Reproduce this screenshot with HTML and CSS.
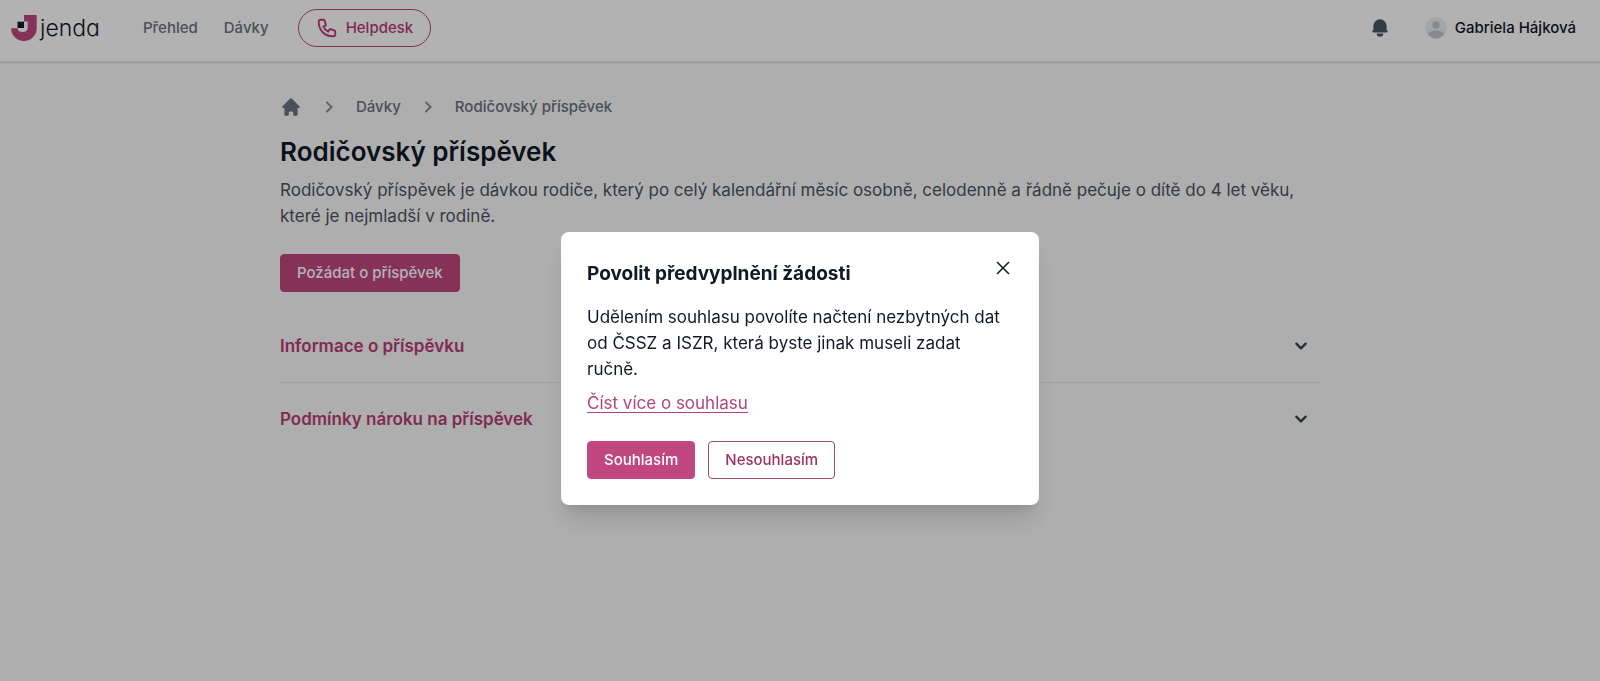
FILE: index.html
```html
<!DOCTYPE html>
<html lang="cs">
<head>
<meta charset="utf-8">
<meta name="viewport" content="width=device-width, initial-scale=1">
<title>Rodičovský příspěvek – Jenda</title>
<link rel="stylesheet" href="styles.css">
</head>
<body>
<header class="topbar">
  <a class="logo" href="#">
    <svg class="logo-mark" viewBox="0 0 26 26" aria-hidden="true">
      <path fill="#c0477f" d="M13 0h12.700v13.200a12.800 12.800 0 0 1-25.600 0h6.400a5.200 4.800 0 0 0 10.200 0V6.500H13z"/>
      <path fill="#111827" d="M6.500 6.700H13V13H6.500z"/>
    </svg>
    <span class="logo-text">jenda</span>
  </a>
  <nav class="nav">
    <a class="nav-link" href="#">Přehled</a>
    <a class="nav-link" href="#">Dávky</a>
    <a class="helpdesk" href="#">
      <svg class="icon-phone" viewBox="0 0 24 24" aria-hidden="true"><path d="M3 5a2 2 0 0 1 2-2h3.280a1 1 0 0 1 .95.680l1.500 4.500a1 1 0 0 1-.5 1.200l-2.260 1.130a11 11 0 0 0 5.520 5.520l1.130-2.260a1 1 0 0 1 1.200-.5l4.500 1.500a1 1 0 0 1 .68.950V19a2 2 0 0 1-2 2h-1C9.700 21 3 14.300 3 6V5z"/></svg>
      Helpdesk
    </a>
  </nav>
  <div class="account">
    <button class="bell" type="button" aria-label="Oznámení">
      <svg class="icon" viewBox="0 0 20 20" aria-hidden="true"><path d="M10 2a6 6 0 0 0-6 6v3.590l-.7.700A1 1 0 0 0 4 14h12a1 1 0 0 0 .7-1.710l-.7-.700V8a6 6 0 0 0-6-6zM10 18a3 3 0 0 1-3-3h6a3 3 0 0 1-3 3z"/></svg>
    </button>
    <a class="user" href="#">
      <svg class="avatar" viewBox="0 0 22 22" aria-hidden="true">
        <circle cx="11" cy="11" r="11" fill="#ebecef"/>
        <circle cx="11" cy="8" r="3.700" fill="#c3c6cd"/>
        <path fill="#c3c6cd" d="M2.800 16.500c1.700-2 5-3 8.200-3s6.500 1 8.200 3A10.500 10.500 0 0 1 11 21.500a10.500 10.500 0 0 1-8.200-5z"/>
      </svg>
      Gabriela Hájková
    </a>
  </div>
</header>

<main class="page">
  <nav class="crumbs" aria-label="Drobečková navigace">
    <a class="crumb-home" href="#" aria-label="Domů"><svg class="icon" viewBox="0 0 20 20" aria-hidden="true"><path d="M10.700 2.300a1 1 0 0 0-1.400 0l-7 7a1 1 0 0 0 .7 1.700H4v6a1 1 0 0 0 1 1h2a1 1 0 0 0 1-1v-2a1 1 0 0 1 1-1h2a1 1 0 0 1 1 1v2a1 1 0 0 0 1 1h2a1 1 0 0 0 1-1v-6h1a1 1 0 0 0 .7-1.700z"/></svg></a>
    <svg class="crumb-sep" viewBox="0 0 20 20" aria-hidden="true"><path d="M7.500 5l5 5-5 5"/></svg>
    <a href="#">Dávky</a>
    <svg class="crumb-sep" viewBox="0 0 20 20" aria-hidden="true"><path d="M7.500 5l5 5-5 5"/></svg>
    <a href="#">Rodičovský příspěvek</a>
  </nav>
  <h1 class="title">Rodičovský příspěvek</h1>
  <p class="lead">Rodičovský příspěvek je dávkou rodiče, který po celý kalendářní měsíc osobně, celodenně a řádně pečuje o dítě do 4 let věku, které je nejmladší v rodině.</p>
  <button class="btn btn-primary" type="button">Požádat o příspěvek</button>
  <div class="accordion">
    <button class="accordion-row" type="button" aria-expanded="false">Informace o příspěvku
      <svg class="chevron" viewBox="0 0 12 12" aria-hidden="true"><path d="M2 4l4 4 4-4"/></svg>
    </button>
    <button class="accordion-row" type="button" aria-expanded="false">Podmínky nároku na příspěvek
      <svg class="chevron" viewBox="0 0 12 12" aria-hidden="true"><path d="M2 4l4 4 4-4"/></svg>
    </button>
  </div>
</main>

<div class="overlay">
  <section class="modal" role="dialog" aria-modal="true" aria-labelledby="consent-title">
    <div class="modal-head">
      <h2 class="modal-title" id="consent-title">Povolit předvyplnění žádosti</h2>
      <button class="close" type="button" aria-label="Zavřít"><svg class="close-icon" viewBox="0 0 14 14" aria-hidden="true"><path d="M1 1l12 12M13 1L1 13"/></svg></button>
    </div>
    <p class="modal-text">Udělením souhlasu povolíte načtení nezbytných dat od ČSSZ a ISZR, která byste jinak museli zadat ručně.</p>
    <a class="modal-link" href="#">Číst více o souhlasu</a>
    <div class="modal-actions">
      <button class="btn btn-primary" type="button">Souhlasím</button>
      <button class="btn btn-outline" type="button">Nesouhlasím</button>
    </div>
  </section>
</div>
</body>
</html>
```
FILE: styles.css
```css
* { box-sizing: border-box; }

body {
  margin: 0;
  min-height: 100vh;
  background: #f9f9f9;
  color: #111827;
  font-family: Inter, "Liberation Sans", sans-serif;
  font-size: 15px;
  line-height: 24px;
}

a { color: inherit; text-decoration: none; }
button { font: inherit; cursor: pointer; }
h1, h2, p { margin: 0; }

.topbar {
  display: flex;
  align-items: center;
  padding: 9px 24px 14px 11px;
  background: #ffffff;
  border-bottom: 1px solid #e5e7eb;
  box-shadow: 0 1px 2px rgba(0, 0, 0, 0.12);
  font-weight: 500;
}

.logo { display: flex; align-items: center; }
.logo-mark { width: 26px; height: 26px; }
.logo-text {
  margin-left: 3px;
  font-size: 23px;
  font-weight: 300;
  font-feature-settings: "cv11";
}

.nav { display: flex; align-items: center; gap: 26px; margin-left: 43px; color: #6b7280; }
.helpdesk {
  display: flex;
  align-items: center;
  gap: 8px;
  margin-left: 3px;
  padding: 6px 17px;
  border: 1px solid #c0477f;
  border-radius: 20px;
  color: #b83d76;
}
.icon-phone { width: 22px; height: 22px; fill: none; stroke: currentColor; stroke-width: 2; stroke-linejoin: round; }

.account { display: flex; align-items: center; gap: 34px; margin-left: auto; }
.icon { display: block; width: 22px; height: 22px; fill: currentColor; }
.bell { padding: 0; border: 0; background: none; color: #4b5563; }
.user { display: flex; align-items: center; gap: 8px; }
.avatar { width: 22px; height: 22px; }

.page { max-width: 1088px; margin: 0 auto; padding: 33px 24px; }

.crumbs { display: flex; align-items: center; gap: 17px; color: #6b7280; font-weight: 500; }
.crumb-sep { width: 20px; height: 20px; fill: none; stroke: #8b909a; stroke-width: 2; }

.title { margin-top: 16px; font-size: 26px; line-height: 34px; font-weight: 600; }
.lead { margin-top: 8px; color: #4b5563; font-size: 17px; line-height: 26px; }

.btn {
  padding: 6px 16px;
  border: 1px solid #c0477f;
  border-radius: 4px;
  font-size: 15px;
  font-weight: 500;
}
.btn-primary { background: #c0477f; color: #ffffff; }
.btn-outline { background: #ffffff; border-color: #a04a74; color: #9c3360; }
.page .btn { margin-top: 25px; }

.accordion { margin-top: 18px; }
.accordion-row {
  display: flex;
  align-items: center;
  justify-content: space-between;
  width: 100%;
  padding: 24px 12px 24px 0;
  border: 0;
  background: none;
  color: #b83d76;
  font-size: 17px;
  font-weight: 600;
}
.accordion-row + .accordion-row { border-top: 1px solid #e5e7eb; }
.chevron { width: 14px; height: 14px; fill: none; stroke: #374151; stroke-width: 2; stroke-linecap: round; stroke-linejoin: round; }

.overlay {
  position: fixed;
  inset: 0;
  display: flex;
  align-items: center;
  justify-content: center;
  padding-top: 56px;
  background: rgba(0, 0, 0, 0.3);
}
.modal {
  width: 100%;
  max-width: 478px;
  padding: 26px;
  border-radius: 8px;
  background: #ffffff;
  box-shadow: 0 18px 24px -4px rgba(0, 0, 0, 0.12), 0 8px 10px -4px rgba(0, 0, 0, 0.08);
}
.modal-head { display: flex; justify-content: space-between; align-items: flex-start; }
.modal-title { padding-top: 3px; font-size: 19px; line-height: 26px; font-weight: 700; }
.close { display: grid; place-items: center; width: 20px; height: 20px; padding: 0; border: 0; background: none; }
.close-icon { width: 14px; height: 14px; fill: none; stroke: #111827; stroke-width: 1.5; }
.modal-text { margin-top: 17px; font-size: 17px; line-height: 26px; }
.modal-link { display: inline-block; margin-top: 8px; color: #b0457a; font-size: 17px; line-height: 26px; text-decoration: underline; text-underline-offset: 3px; text-decoration-thickness: 1px; }
.modal-actions { display: flex; gap: 13px; margin-top: 25px; }
```
